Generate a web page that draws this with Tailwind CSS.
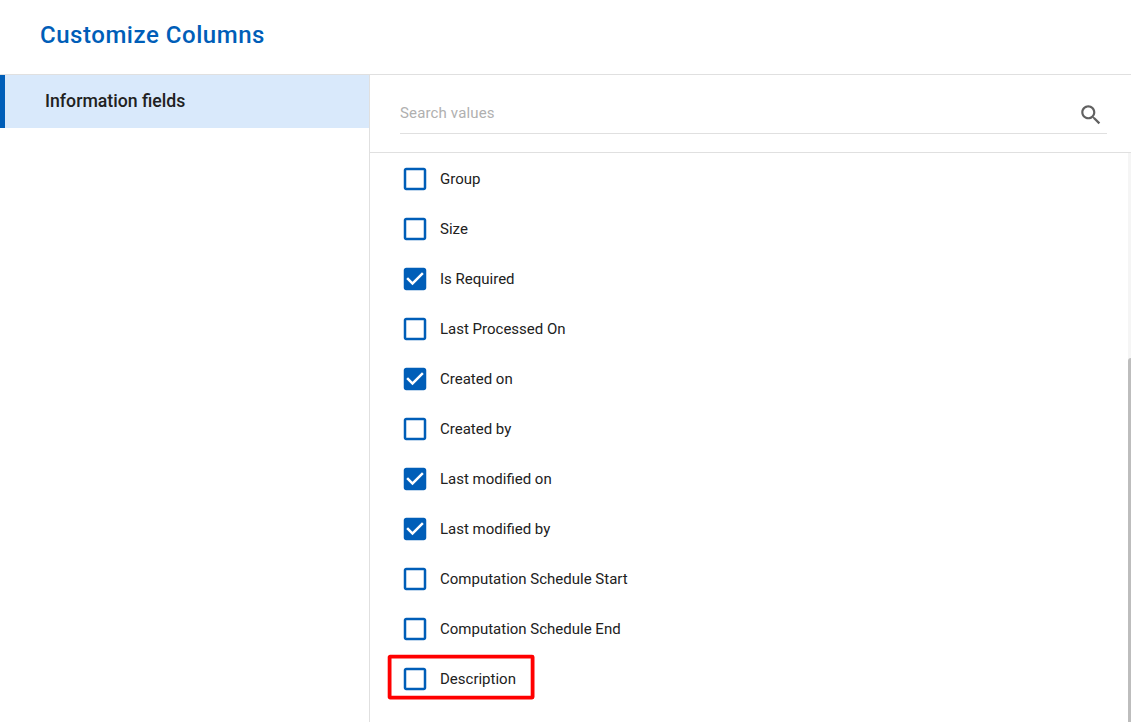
<!DOCTYPE html>
<html lang="en">
<head>
<meta charset="utf-8">
<title>Customize Columns</title>
<script src="https://cdn.jsdelivr.net/npm/@tailwindcss/browser@4"></script>
</head>
<body class="h-[722px] w-[1131px] overflow-hidden bg-white font-[Roboto,sans-serif] text-[#212121]">
<svg class="hidden">
  <symbol id="off" viewBox="0 0 24 24"><path d="M19 5v14H5V5h14m0-2H5c-1.1 0-2 .9-2 2v14c0 1.1.9 2 2 2h14c1.1 0 2-.9 2-2V5c0-1.1-.9-2-2-2z"/></symbol>
  <symbol id="on" viewBox="0 0 24 24"><path d="M19 3H5c-1.11 0-2 .9-2 2v14c0 1.1.89 2 2 2h14c1.11 0 2-.9 2-2V5c0-1.1-.89-2-2-2zm-9 14l-5-5 1.41-1.41L10 14.17l7.59-7.59L19 8l-9 9z"/></symbol>
</svg>
<div class="flex h-full flex-col">
  <header class="flex h-[75px] shrink-0 items-center border-b border-[#e0e0e0] px-10 pb-[5px]">
    <h1 class="text-2xl font-medium tracking-[0.54px] text-[#005eb8]">Customize Columns</h1>
  </header>
  <div class="flex min-h-0 flex-1">
    <aside class="w-[370px] shrink-0 border-r border-[#e0e0e0]">
      <div class="flex h-[53px] items-center border-l-5 border-[#005eb8] bg-[#d9e9fb] pl-10 text-[17.7px] font-medium">Information fields</div>
    </aside>
    <main class="flex min-w-0 flex-1 flex-col">
      <div class="h-[78px] shrink-0 border-b border-[#e0e0e0] pl-[30px] pr-6">
        <div class="flex h-[59px] items-center justify-between border-b border-[#e0e0e0] pt-[18px]">
          <span class="text-[15px] tracking-[0.15px] text-[#b0b0b0]">Search values</span>
          <svg class="mr-[3px] mt-[4px] size-[26px] fill-[#616161]" viewBox="0 0 24 24"><path d="M15.5 14h-.79l-.28-.27C15.41 12.59 16 11.11 16 9.5 16 5.91 13.09 3 9.5 3S3 5.91 3 9.5 5.91 16 9.5 16c1.61 0 3.09-.59 4.23-1.57l.27.28v.79l5 4.99L20.49 19l-4.99-5zm-6 0C7.01 14 5 11.99 5 9.5S7.01 5 9.5 5 14 7.01 14 9.5 11.99 14 9.5 14z"/></svg>
        </div>
      </div>
      <div class="flex min-h-0 flex-1">
        <ul class="flex-1 pl-[30px] pt-px text-[15px] *:flex *:h-[50px] *:items-center *:gap-[10px] [&_svg]:size-[30px] [&_svg]:fill-[#005eb8]">
          <li><svg><use href="#off"/></svg><span>Group</span></li>
          <li><svg><use href="#off"/></svg><span>Size</span></li>
          <li><svg><use href="#on"/></svg><span>Is Required</span></li>
          <li><svg><use href="#off"/></svg><span>Last Processed On</span></li>
          <li><svg><use href="#on"/></svg><span>Created on</span></li>
          <li><svg><use href="#off"/></svg><span>Created by</span></li>
          <li><svg><use href="#on"/></svg><span>Last modified on</span></li>
          <li><svg><use href="#on"/></svg><span>Last modified by</span></li>
          <li><svg><use href="#off"/></svg><span>Computation Schedule Start</span></li>
          <li><svg><use href="#off"/></svg><span>Computation Schedule End</span></li>
          <li class="relative"><svg><use href="#off"/></svg><span>Description</span>
            <svg class="absolute -left-[13px] top-0 h-[47px]! w-[149px]! fill-none!" viewBox="0 0 149 47"><rect x="2.6" y="2.6" width="143" height="41" rx="0.5" stroke="#ff0000" stroke-width="3.8" stroke-linejoin="round"/></svg></li>
        </ul>
        <div class="w-[3px] bg-[#f5f5f5] pt-[205px]"><div class="h-full rounded-tl-[3px] bg-[#bdbdbd]"></div></div>
      </div>
    </main>
  </div>
</div>
</body>
</html>
